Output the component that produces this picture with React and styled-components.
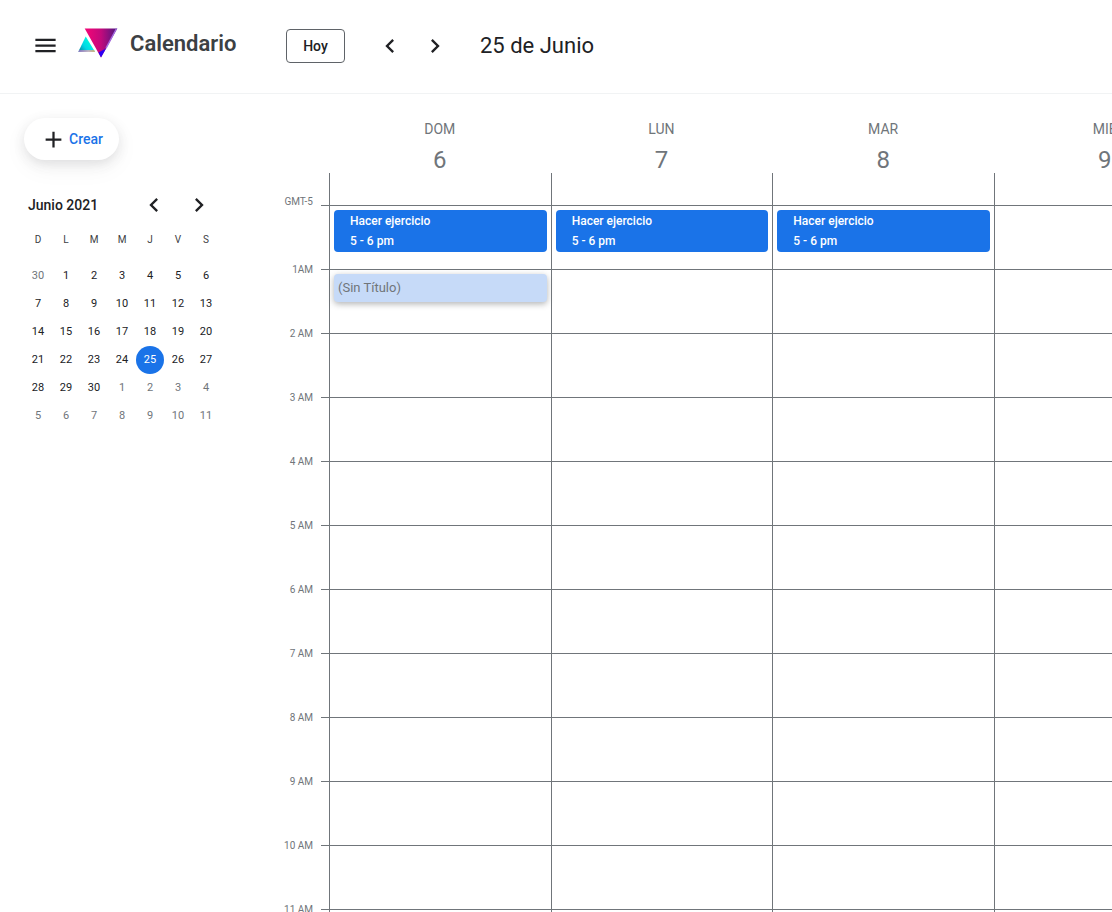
import React from 'react';
import styled, { createGlobalStyle } from 'styled-components';
import { MdMenu, MdChevronLeft, MdChevronRight, MdAdd } from 'react-icons/md';

const GlobalStyle = createGlobalStyle`
  html, body {
    margin: 0;
    padding: 0;
    background: #fff;
    font-family: Roboto, "Liberation Sans", sans-serif;
  }
  * { box-sizing: border-box; }
`;

const Page = styled.div`
  width: 1112px;
  height: 912px;
  overflow: hidden;
  display: flex;
  flex-direction: column;
`;

const Header = styled.header`
  height: 94px;
  flex-shrink: 0;
  display: flex;
  align-items: center;
  padding: 0 0 2px 32px;
  border-bottom: 1px solid #f1f3f4;
`;

const IconButton = styled.button`
  width: 26px;
  height: 26px;
  padding: 0;
  border: 0;
  background: none;
  display: flex;
  align-items: center;
  justify-content: center;
  color: #202124;
  svg { flex-shrink: 0; }
`;

const Logo = styled.svg`
  width: 42px;
  height: 32px;
  margin: -6px 0 0 20px;
  flex-shrink: 0;
`;

const Brand = styled.h1`
  margin: -4px 0 0 10px;
  width: 156px;
  font-size: 22px;
  font-weight: 600;
  color: #3c4043;
`;

const TodayButton = styled.button`
  width: 59px;
  height: 34px;
  border: 1px solid #5f6368;
  border-radius: 4px;
  background: #fff;
  font: 500 14px Roboto, sans-serif;
  color: #202124;
`;

const NavGroup = styled.div`
  display: flex;
  gap: 19px;
  margin-left: 32px;
`;

const CurrentDate = styled.div`
  margin-left: 32px;
  font-size: 22px;
  color: #202124;
`;

const Body = styled.div`
  flex: 1;
  display: flex;
  min-height: 0;
`;

const Sidebar = styled.aside`
  width: 274px;
  flex-shrink: 0;
  padding: 24px 0 0 24px;
`;

const CreateButton = styled.button`
  width: 95px;
  height: 42px;
  padding: 0 0 0 16px;
  border: 0;
  border-radius: 21px;
  background: #fff;
  box-shadow: 0 4px 12px rgba(60, 64, 67, 0.13), 0 8px 24px rgba(60, 64, 67, 0.05);
  display: flex;
  align-items: center;
  gap: 2px;
  font: 500 14px Roboto, sans-serif;
  color: #1a73e8;
  svg { color: #202124; flex-shrink: 0; }
`;

const MiniCalendar = styled.section`
  margin: 31px 0 0 -24px;
  padding-left: 28px;
`;

const MiniHeader = styled.div`
  height: 28px;
  display: flex;
  align-items: center;
`;

const MiniTitle = styled.div`
  width: 112px;
  font-size: 14px;
  font-weight: 500;
  color: #202124;
`;

const MiniNav = styled.div`
  display: flex;
  gap: 17px;
  color: #202124;
`;

const WeekGrid = styled.div`
  display: grid;
  grid-template-columns: repeat(7, 28px);
  height: 28px;
  margin: 6px 0 9px -4px;
`;

const DaysGrid = styled.div`
  display: grid;
  grid-template-columns: repeat(7, 28px);
  grid-auto-rows: 28px;
  margin-left: -4px;
`;

const WeekLabel = styled.div`
  display: flex;
  align-items: center;
  justify-content: center;
  font-size: 10px;
  color: #3c4043;
`;

const DayCell = styled.div`
  padding-bottom: 2px;
  border-radius: 50%;
  display: flex;
  align-items: center;
  justify-content: center;
  font-size: 11px;
  color: ${({ $selected, $muted }) => ($selected ? '#fff' : $muted ? '#70757a' : '#202124')};
  background: ${({ $selected }) => ($selected ? '#1a73e8' : 'transparent')};
`;

const Schedule = styled.main`
  flex: 1;
  min-width: 0;
  display: flex;
  overflow: hidden;
`;

const TimeColumn = styled.div`
  width: 55px;
  flex-shrink: 0;
  padding-top: 79px;
`;

const TimeSpacer = styled.div`
  height: 32px;
`;

const TimeRow = styled.div`
  height: 64px;
  position: relative;
  &::after {
    content: '';
    display: block;
    width: 8px;
    height: 1px;
    margin-left: 47px;
    background: #70757a;
  }
`;

const TimeLabel = styled.span`
  position: absolute;
  right: 16px;
  top: ${({ $first }) => ($first ? '-9px' : '-5px')};
  font-size: 10px;
  line-height: 12px;
  color: #70757a;
`;

const DayColumn = styled.div`
  width: 221.67px;
  flex-shrink: 0;
`;

const DayHead = styled.div`
  height: 79px;
  padding-top: 27px;
  display: flex;
  flex-direction: column;
  align-items: center;
  color: #70757a;
`;

const DayName = styled.div`
  font-size: 14px;
  line-height: 16px;
`;

const DayNumber = styled.div`
  font-size: 24px;
  line-height: 28px;
  margin-top: 9px;
`;

const DaySpacer = styled.div`
  height: 32px;
  border-left: 1px solid #70757a;
`;

const Slot = styled.div`
  height: 64px;
  padding: 4px 4px 0;
  border-left: 1px solid #70757a;
  border-top: 1px solid #70757a;
`;

const EventCard = styled.div`
  height: 42px;
  padding: 1px 0 0 16px;
  border-radius: 4px;
  background: #1a73e8;
  color: #fff;
  font-size: 12px;
  font-weight: 500;
  line-height: 20px;
`;

const DraftEvent = styled.div`
  height: 28px;
  padding-left: 4px;
  border-radius: 4px;
  background: #c6daf8;
  box-shadow: 0 2px 6px rgba(60, 64, 67, 0.4);
  color: #70757a;
  font-size: 13px;
  line-height: 27px;
`;

const weekLabels = ['D', 'L', 'M', 'M', 'J', 'V', 'S'];

const miniDays = [
  [30, true], [1], [2], [3], [4], [5], [6],
  [7], [8], [9], [10], [11], [12], [13],
  [14], [15], [16], [17], [18], [19], [20],
  [21], [22], [23], [24], [25], [26], [27],
  [28], [29], [30], [1, true], [2, true], [3, true], [4, true],
  [5, true], [6, true], [7, true], [8, true], [9, true], [10, true], [11, true],
];

const hours = ['1AM', '2 AM', '3 AM', '4 AM', '5 AM', '6 AM', '7 AM', '8 AM', '9 AM', '10 AM', '11 AM'];

const days = [
  { name: 'DOM', number: 6, event: true, draft: true },
  { name: 'LUN', number: 7, event: true },
  { name: 'MAR', number: 8, event: true },
  { name: 'MIE', number: 9 },
];

const slotRows = ['GMT-5', ...hours];

const LogoMark = () => (
  <Logo viewBox="0 0 42 32">
    <defs>
      <linearGradient id="big" x1="0" y1="0" x2="1" y2="0">
        <stop offset="0.1" stopColor="#ec0677" />
        <stop offset="0.5" stopColor="#c20a7c" />
        <stop offset="1" stopColor="#4a1780" />
      </linearGradient>
      <linearGradient id="small" x1="0" y1="1" x2="0.7" y2="0.5">
        <stop offset="0" stopColor="#0a7a95" />
        <stop offset="0.6" stopColor="#00d8e6" />
        <stop offset="1" stopColor="#00f0e0" />
      </linearGradient>
      <linearGradient id="strip" x1="0" y1="0" x2="1" y2="0">
        <stop offset="0" stopColor="#a070c8" />
        <stop offset="0.6" stopColor="#f0a8b8" />
        <stop offset="1" stopColor="#f5a050" />
      </linearGradient>
    </defs>
    <polygon points="7.7,9.500 17,24.800 0.300,24.800" fill="url(#small)" />
    <polygon points="1.200,23.300 16.200,23.300 17,24.800 0.300,24.800" fill="url(#strip)" />
    <polygon points="6.700,1.500 39.300,1.500 23,30.500" fill="url(#big)" />
    <polygon points="28,21.500 23,30.500 20.500,25.500" fill="#2a00f5" />
    <polygon points="39.300,1.500 37.800,1.500 27.500,20.500 28.500,21.800" fill="#a56adf" />
  </Logo>
);

const App = () => (
  <Page>
    <GlobalStyle />
    <Header>
      <IconButton><MdMenu size={27} /></IconButton>
      <LogoMark />
      <Brand>Calendario</Brand>
      <TodayButton>Hoy</TodayButton>
      <NavGroup>
        <IconButton><MdChevronLeft size={28} /></IconButton>
        <IconButton><MdChevronRight size={28} /></IconButton>
      </NavGroup>
      <CurrentDate>25 de Junio</CurrentDate>
    </Header>
    <Body>
      <Sidebar>
        <CreateButton><MdAdd size={27} />Crear</CreateButton>
        <MiniCalendar>
          <MiniHeader>
            <MiniTitle>Junio 2021</MiniTitle>
            <MiniNav>
              <MdChevronLeft size={28} />
              <MdChevronRight size={28} />
            </MiniNav>
          </MiniHeader>
          <WeekGrid>
            {weekLabels.map((label, idx) => (
              <WeekLabel key={idx}>{label}</WeekLabel>
            ))}
          </WeekGrid>
          <DaysGrid>
            {miniDays.map(([day, muted], idx) => (
              <DayCell key={idx} $muted={muted} $selected={idx === 25}>{day}</DayCell>
            ))}
          </DaysGrid>
        </MiniCalendar>
      </Sidebar>
      <Schedule>
        <TimeColumn>
          <TimeSpacer />
          {slotRows.map((label, idx) => (
            <TimeRow key={label}>
              <TimeLabel $first={idx === 0}>{label}</TimeLabel>
            </TimeRow>
          ))}
        </TimeColumn>
        {days.map((day) => (
          <DayColumn key={day.name}>
            <DayHead>
              <DayName>{day.name}</DayName>
              <DayNumber>{day.number}</DayNumber>
            </DayHead>
            <DaySpacer />
            {slotRows.map((label, idx) => (
              <Slot key={label}>
                {idx === 0 && day.event && (
                  <EventCard>
                    <div>Hacer ejercicio</div>
                    <div>5 - 6 pm</div>
                  </EventCard>
                )}
                {idx === 1 && day.draft && <DraftEvent>(Sin Título)</DraftEvent>}
              </Slot>
            ))}
          </DayColumn>
        ))}
      </Schedule>
    </Body>
  </Page>
);

export default App;
